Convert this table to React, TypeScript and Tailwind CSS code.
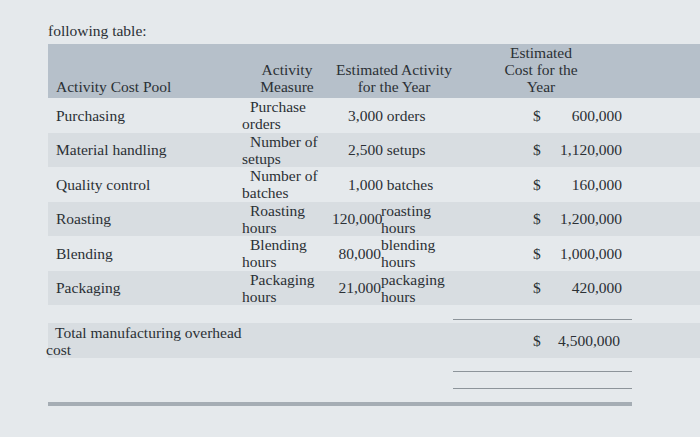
const rows = [
  { pool: "Purchasing", measure: ["Purchase", "orders"], qty: "3,000 orders", cost: "600,000" },
  { pool: "Material handling", measure: ["Number of", "setups"], qty: "2,500 setups", cost: "1,120,000" },
  { pool: "Quality control", measure: ["Number of", "batches"], qty: "1,000 batches", cost: "160,000" },
  { pool: "Roasting", measure: ["Roasting", "hours"], qty: ["120,000", "roasting", "hours"], cost: "1,200,000" },
  { pool: "Blending", measure: ["Blending", "hours"], qty: ["80,000", "blending", "hours"], cost: "1,000,000" },
  { pool: "Packaging", measure: ["Packaging", "hours"], qty: ["21,000", "packaging", "hours"], cost: "420,000" },
];

const cols = "grid grid-cols-[194px_90px_124px_178px]";

const App = () => {
  return (
    <div
      className="min-h-screen w-[700px] h-[437px] overflow-hidden bg-[#e5e9ec] text-[#2b3035] text-[15.5px] leading-[17px]"
      style={{ fontFamily: '"Liberation Serif", "Times New Roman", serif' }}
    >
      <div className="pl-[48px] pt-[22px]">
        <div className="h-[17px]">following table:</div>

        {/* header band */}
        <div className={`${cols} mt-[5px] h-[54px] items-end bg-[#b6c0ca] pb-[3px]`}>
          <div className="pl-[8px]">Activity Cost Pool</div>
          <div className="text-center">
            <div>Activity</div>
            <div>Measure</div>
          </div>
          <div className="text-center">
            <div>Estimated Activity</div>
            <div>for the Year</div>
          </div>
          <div className="pr-[8px] text-center">
            <div>Estimated</div>
            <div>Cost for the</div>
            <div>Year</div>
          </div>
        </div>

        {/* body rows */}
        {rows.map((r, i) => (
          <div
            key={r.pool}
            className={`${cols} h-[34.5px] items-center ${i % 2 === 1 ? "bg-[#d8dde1]" : ""}`}
          >
            <div className="pl-[8px]">{r.pool}</div>
            <div>
              <div className="pl-[8px]">{r.measure[0]}</div>
              <div>{r.measure[1]}</div>
            </div>
            {typeof r.qty === "string" ? (
              <div className="pl-[16px]">{r.qty}</div>
            ) : (
              <div className="flex items-center">
                <span className="w-[49px] text-right">{r.qty[0]}</span>
                <div>
                  <div>{r.qty[1]}</div>
                  <div>{r.qty[2]}</div>
                </div>
              </div>
            )}
            <div className="flex items-center pr-[12px]">
              <span className="pl-[77px]">$</span>
              <span className="flex-1 text-right">{r.cost}</span>
            </div>
          </div>
        ))}

        {/* subtotal line */}
        <div className={`${cols} h-[18px]`}>
          <div />
          <div />
          <div />
          <div className="-ml-[3px] mr-[2px] mt-[14px] h-px bg-[#8d949a]" />
        </div>

        {/* total */}
        <div className={`${cols} h-[35px] items-center bg-[#d8dde1]`}>
          <div className="-ml-[2px] w-[202px] indent-[9px]">Total manufacturing overhead cost</div>
          <div />
          <div />
          <div className="flex items-center pr-[14px]">
            <span className="pl-[77px]">$</span>
            <span className="flex-1 text-right">4,500,000</span>
          </div>
        </div>

        {/* double underline */}
        <div className={`${cols}`}>
          <div />
          <div />
          <div />
          <div className="-ml-[3px] mr-[2px]">
            <div className="mt-[13px] h-px bg-[#8d949a]" />
            <div className="mt-[16px] h-px bg-[#8d949a]" />
          </div>
        </div>

        <div className="mt-[13px] h-[4px] w-[584px] bg-[#a5adb4]" />
      </div>
    </div>
  );
};

export default App;
